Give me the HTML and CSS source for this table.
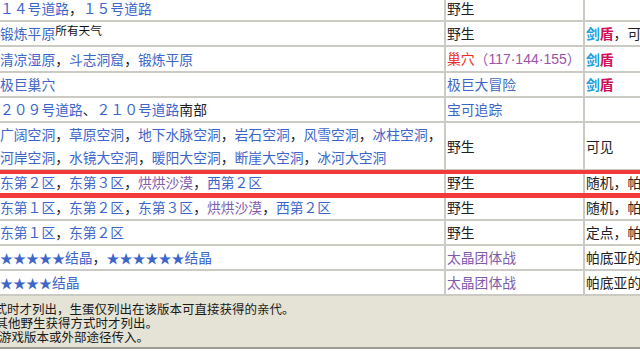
FILE: index.html
```html
<!DOCTYPE html>
<html lang="zh-CN">
<head>
<meta charset="utf-8">
<link rel="stylesheet" href="styles.css">
</head>
<body>
<table class="enc">
<colgroup><col class="c-loc"><col class="c-way"><col class="c-note"></colgroup>
<tbody>
<tr><td><a href="#">１４号道路</a>，<a href="#">１５号道路</a></td><td>野生</td><td></td></tr>
<tr><td><a href="#">锻炼平原</a><sup class="wx">所有天气</sup></td><td>野生</td><td><span class="sw">剑</span><span class="sh">盾</span>，可见</td></tr>
<tr><td><a href="#">清凉湿原</a>，<a href="#">斗志洞窟</a>，<a href="#">锻炼平原</a></td><td><span class="den">巢穴</span><span class="den-no">（<span class="num">117·144·155</span>）</span></td><td><span class="sw">剑</span><span class="sh">盾</span></td></tr>
<tr><td><a href="#">极巨巢穴</a></td><td><a href="#">极巨大冒险</a></td><td><span class="sw">剑</span><span class="sh">盾</span></td></tr>
<tr><td><a href="#">２０９号道路</a>、<a href="#">２１０号道路</a>南部</td><td><a href="#">宝可追踪</a></td><td></td></tr>
<tr><td><a href="#">广阔空洞</a>，<a href="#">草原空洞</a>，<a href="#">地下水脉空洞</a>，<a href="#">岩石空洞</a>，<a href="#">风雪空洞</a>，<a href="#">冰柱空洞</a>，<a href="#">河岸空洞</a>，<a href="#">水镜大空洞</a>，<a href="#">暖阳大空洞</a>，<a href="#">断崖大空洞</a>，<a href="#">冰河大空洞</a></td><td>野生</td><td>可见</td></tr>
<tr class="hl"><td><a href="#">东第２区</a>，<a href="#">东第３区</a>，<a href="#" class="vis">烘烘沙漠</a>，<a href="#">西第２区</a></td><td>野生</td><td>随机，帕底亚的天气</td></tr>
<tr><td><a href="#">东第１区</a>，<a href="#">东第２区</a>，<a href="#">东第３区</a>，<a href="#" class="vis">烘烘沙漠</a>，<a href="#">西第２区</a></td><td>野生</td><td>随机，帕底亚的天气</td></tr>
<tr><td><a href="#">东第１区</a>，<a href="#">东第２区</a></td><td>野生</td><td>定点，帕底亚的天气</td></tr>
<tr><td><a href="#"><span class="stars">★★★★★</span>结晶</a>，<a href="#"><span class="stars">★★★★★★</span>结晶</a></td><td><a href="#" class="vis">太晶团体战</a></td><td>帕底亚的太晶洞窟</td></tr>
<tr><td><a href="#"><span class="stars">★★★★</span>结晶</a></td><td><a href="#" class="vis">太晶团体战</a></td><td>帕底亚的太晶洞窟</td></tr>
</tbody>
<tfoot>
<tr class="foot"><td colspan="3">
<div class="fl fl1">式时才列出，生蛋仅列出在该版本可直接获得的亲代。</div>
<div class="fl fl2">其他野生获得方式时才列出。</div>
<div class="fl fl3">游戏版本或外部途径传入。</div>
</td></tr>
</tfoot>
</table>
</body>
</html>
```

FILE: styles.css
```css
html, body {
  margin: 0;
  padding: 0;
  background: #ffffff;
  overflow: hidden;
}

body {
  font-family: "Noto Sans CJK SC", "Noto Sans", sans-serif;
  font-size: 13.8px;
  color: #202122;
}

a {
  color: #3d66c9;
  text-decoration: none;
}

a.vis {
  color: #7e5cae;
}

.enc {
  border-collapse: separate;
  border-spacing: 0;
  table-layout: fixed;
  width: 788px;
  margin: -3px 0 0 -1px;
}

.c-loc { width: 447px; }
.c-way { width: 139px; }
.c-note { width: 202px; }

.enc td {
  padding: 0 0 0 1px;
  line-height: 23px;
  vertical-align: middle;
  border-right: 2px solid #cbcbc3;
  border-bottom: 2px solid #cbcbc3;
  background: #ffffff;
}

.enc td:nth-child(2),
.enc td:nth-child(3) {
  white-space: nowrap;
}

.wx {
  font-size: 11.7px;
  line-height: 0;
  vertical-align: 4px;
  color: #111;
}

.sw {
  color: #1d9ee0;
  font-weight: bold;
}

.sh {
  color: #cf1159;
  font-weight: bold;
}

.den {
  color: #ee2d24;
}

.den-no {
  color: #9e52a8;
}

.num {
  font-family: "Liberation Sans", Arial, sans-serif;
  font-size: 14px;
}

.stars {
  font-family: "Noto Sans CJK SC", sans-serif;
  font-size: 13px;
}

.hl td:first-child {
  position: relative;
}

.hl td:first-child::after {
  content: "";
  position: absolute;
  left: -20px;
  top: -1px;
  width: 900px;
  height: 28px;
  box-sizing: border-box;
  border-top: 4px solid #f23a3a;
  border-bottom: 5px solid #f23a3a;
  pointer-events: none;
}

.foot td {
  background: #e4e3d6;
  border-right: none;
  border-bottom: 2px solid #9c9c92;
  padding: 6px 0 3px 0;
  font-size: 12.5px;
  line-height: 14px;
  color: #1a1a1a;
  white-space: nowrap;
}

.fl1 { margin-left: -4.5px; }
.fl2 { margin-left: -3.5px; }
.fl3 { margin-left: 0; }
```
